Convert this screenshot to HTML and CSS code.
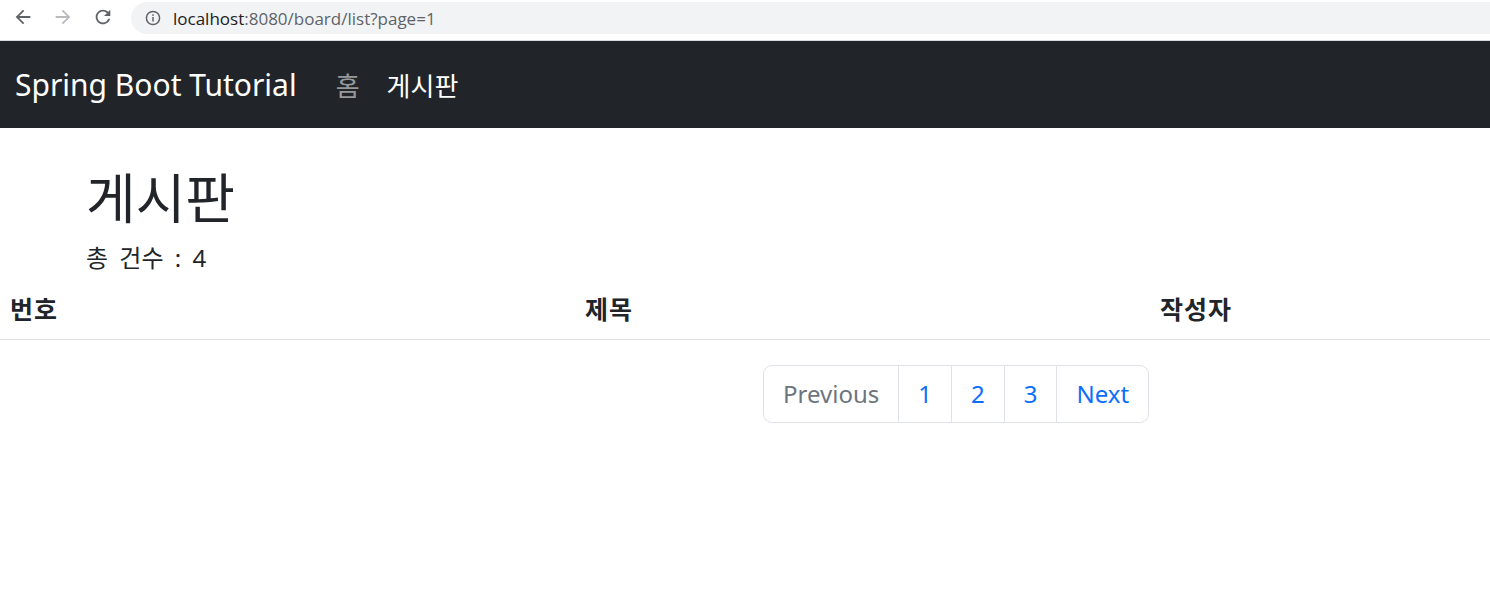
FILE: index.html
```html
<!DOCTYPE html>
<html lang="ko">
<head>
<meta charset="utf-8">
<title>Board</title>
<link rel="stylesheet" href="styles.css">
</head>
<body>
<div class="chrome">
  <div class="chrome-btns">
    <svg class="cb" width="22" height="22" viewBox="0 0 24 24"><path d="M20 11H7.83l5.59-5.59L12 4l-8 8 8 8 1.41-1.41L7.83 13H20v-2z" fill="#5f6368"/></svg>
    <svg class="cb" width="22" height="22" viewBox="0 0 24 24"><path d="M12 4l-1.41 1.41L16.17 11H4v2h12.17l-5.58 5.59L12 20l8-8z" fill="#b8babd"/></svg>
    <svg class="cb" width="22" height="22" viewBox="0 0 24 24"><path d="M17.65 6.35A7.958 7.958 0 0 0 12 4c-4.42 0-7.99 3.58-7.99 8s3.57 8 7.99 8c3.73 0 6.84-2.55 7.730-6h-2.08A5.99 5.99 0 0 1 12 18c-3.31 0-6-2.69-6-6s2.69-6 6-6c1.66 0 3.14.69 4.22 1.78L13 11h7V4l-2.35 2.35z" fill="#5f6368"/></svg>
  </div>
  <div class="omnibox">
    <svg class="info" width="16" height="16" viewBox="0 0 16 16"><circle cx="8" cy="8" r="6.6" fill="none" stroke="#5f6368" stroke-width="1.5"/><rect x="7.25" y="7" width="1.5" height="4.5" fill="#5f6368"/><rect x="7.25" y="4.3" width="1.5" height="1.6" fill="#5f6368"/></svg>
    <span class="url"><span class="host">localhost</span>:8080/board/list?page=1</span>
  </div>
</div>
<nav class="navbar">
  <a class="brand">Spring Boot Tutorial</a>
  <ul class="nav">
    <li><a class="nav-link">홈</a></li>
    <li><a class="nav-link active">게시판</a></li>
  </ul>
</nav>
<main>
  <div class="container">
    <h1 class="title">게시판</h1>
    <div class="count">총 건수 : 4</div>
  </div>
  <table class="table">
    <thead>
      <tr><th>번호</th><th>제목</th><th>작성자</th></tr>
    </thead>
    <tbody></tbody>
  </table>
  <div class="pager-wrap">
    <ul class="pagination">
      <li class="page-item disabled"><a class="page-link">Previous</a></li>
      <li class="page-item"><a class="page-link">1</a></li>
      <li class="page-item"><a class="page-link">2</a></li>
      <li class="page-item"><a class="page-link">3</a></li>
      <li class="page-item"><a class="page-link">Next</a></li>
    </ul>
  </div>
</main>
</body>
</html>
```
FILE: styles.css
```css
* { box-sizing: border-box; }
html, body { margin: 0; padding: 0; background: #fff; }
body {
  font-family: "Noto Sans", "Noto Sans CJK KR", sans-serif;
  color: #212529;
}
.chrome {
  height: 41px;
  display: flex;
  align-items: flex-start;
  background: #fff;
  border-bottom: 1px solid #d7d9dc;
}
.chrome-btns {
  display: flex;
  gap: 18px;
  padding: 6px 0 0 12px;
  width: 131px;
}
.omnibox {
  flex: 1;
  height: 32px;
  margin-top: 2px;
  background: #f1f3f4;
  border-radius: 16px 0 0 16px;
  display: flex;
  align-items: center;
  padding-left: 14px;
}
.info { margin-right: 12px; }
.url {
  font-family: "Open Sans", "Noto Sans", sans-serif;
  font-size: 17px;
  color: #5f6368;
}
.host { color: #202124; }
.navbar {
  background: #212529;
  height: 87px;
  display: flex;
  align-items: center;
  padding: 0 15px;
}
.brand {
  color: #fff;
  font-size: 30px;
  margin-right: 24px;
}
.nav {
  list-style: none;
  display: flex;
  margin: 0;
  padding: 0;
  gap: 27px;
  margin-left: 15px;
}
.nav-link {
  font-size: 26px;
  color: rgba(255,255,255,.55);
  font-family: "Noto Sans CJK KR", sans-serif;
}
.nav-link.active { color: #fff; }
.container { padding: 26px 0 0 86px; }
.title {
  margin: 0;
  font-family: "Noto Sans CJK KR", sans-serif;
  font-weight: 400;
  font-size: 54px;
  line-height: 84px;
}
.count {
  font-size: 24px;
  line-height: 36px;
  margin-top: 2px;
  word-spacing: 5px;
  font-family: "Noto Sans", "Noto Sans CJK KR", sans-serif;
}
.table {
  width: 100%;
  border-collapse: collapse;
  margin-top: 4px;
  table-layout: fixed;
}
.table th {
  text-align: left;
  font-family: "Noto Sans CJK KR", sans-serif;
  font-weight: 700;
  font-size: 25px;
  letter-spacing: 1px;
  padding: 10px 10px 13px;
  border-bottom: 1px solid #dee2e6;
  width: 575px;
}
.table th:last-child { width: auto; }
.pager-wrap { padding: 25px 0 0 763px; }
.pagination {
  list-style: none;
  display: flex;
  margin: 0;
  padding: 0;
}
.page-link {
  display: block;
  height: 58px;
  line-height: 56px;
  font-size: 24px;
  padding: 0 19px;
  color: #0d6efd;
  border: 1px solid #dee2e6;
  margin-left: -1px;
  background: #fff;
}
.page-item:first-child .page-link { border-radius: 9px 0 0 9px; margin-left: 0; }
.page-item:last-child .page-link { border-radius: 0 9px 9px 0; }
.page-item.disabled .page-link { color: #6c757d; }
```
